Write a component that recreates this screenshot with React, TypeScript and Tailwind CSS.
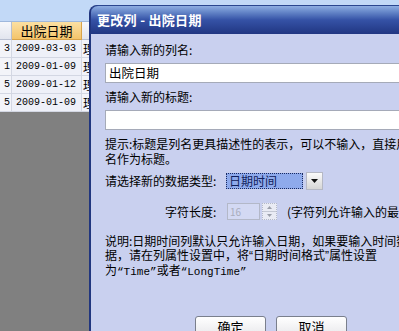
import React from 'react';

const cjk = "font-['Noto_Sans_CJK_SC','Noto_Sans',sans-serif]";
const mono = "font-['Liberation_Mono','DejaVu_Sans_Mono',monospace]";
const latin = "font-['Liberation_Sans',sans-serif]";

const rows = [
  { id: '3', date: '2009-03-03' },
  { id: '1', date: '2009-01-09' },
  { id: '5', date: '2009-01-12' },
  { id: '5', date: '2009-01-09' },
];

function Grid() {
  return (
    <div className="flex flex-col h-full">
      <div className="h-[22px] shrink-0 bg-[#c2d9f7] border-b border-[#9fb8dc]" />
      {/* header */}
      <div className={`flex h-[18px] shrink-0 text-[13px] ${cjk}`}>
        <div className="w-[12px] bg-gradient-to-b from-[#f7f8fb] to-[#e2e5ee] border-r border-b border-[#b8bfd0]" />
        <div className="w-[70px] flex items-center justify-center bg-gradient-to-b from-[#fbe0a2] to-[#f4c46a] border-r border-b border-[#d9a44a] text-black">
          出院日期
        </div>
        <div className="flex-1 bg-gradient-to-b from-[#f7f8fb] to-[#e2e5ee] border-b border-[#b8bfd0]" />
      </div>
      {rows.map((r, i) => (
        <div key={i} className="flex h-[18px] shrink-0 text-[10px] text-black">
          <div className={`w-[12px] flex items-center justify-end pr-[1px] bg-[#f3f4f9] border-r border-b border-[#d3d7e3] overflow-hidden ${mono}`}>
            {r.id}
          </div>
          <div className={`w-[70px] flex items-center pl-[4px] bg-[#eef0f8] border-r border-b border-[#d3d7e3] ${mono}`}>
            {r.date}
          </div>
          <div className={`flex-1 flex items-center pl-[1px] bg-[#f3f4f9] border-b border-[#d3d7e3] text-[12px] overflow-hidden ${cjk}`}>
            理
          </div>
        </div>
      ))}
      <div className="flex-1 bg-[#808080]" />
    </div>
  );
}

const Q = ({ c }: { c: string }) => <span className={latin}>{c}</span>;

function Dialog() {
  return (
    <div className={`absolute left-[89px] top-[5px] right-[-20px] bottom-[-30px] rounded-tl-[8px] overflow-hidden bg-[#21367f] pl-[2px] ${cjk}`}>
      <div className="h-[29px] rounded-tl-[7px] bg-gradient-to-b from-[#8eaee2] via-[#3552a6] via-50% to-[#213682] flex items-center pl-[6px] border-t border-[#2a4690]">
        <span className="text-white text-[13px] font-bold tracking-[0.3px]">更改列 - 出院日期</span>
      </div>
      <div className="h-full bg-[#c9d0ef] pl-[14px] text-[12px] text-black flex flex-col">
        <div className="mt-[8px] leading-[16px] whitespace-nowrap">请输入新的列名:</div>
        <div className="mt-[5px] h-[20px] shrink-0 bg-white border border-[#a5aab8] flex items-center pl-[3px] text-[12.5px] whitespace-nowrap">
          出院日期
        </div>
        <div className="mt-[6px] leading-[16px] whitespace-nowrap">请输入新的标题:</div>
        <div className="mt-[5px] h-[20px] shrink-0 bg-white border border-[#a5aab8]" />
        <div className="mt-[6px] leading-[15px] whitespace-nowrap">
          <div>提示:标题是列名更具描述性的表示，可以不输入，直接用列</div>
          <div>名作为标题。</div>
        </div>
        <div className="mt-[6px] h-[18px] shrink-0 flex items-center whitespace-nowrap">
          <span className="w-[121px] shrink-0">请选择新的数据类型:</span>
          <div className="flex items-center h-[18px] shrink-0">
            <div className="h-[16px] w-[77px] shrink-0 bg-[#8eaaec] border border-dotted border-[#1a2a60] flex items-center pl-[2px] text-[#10205a] leading-none">
              日期时间
            </div>
            <div className="ml-[3px] h-[18px] w-[17px] shrink-0 bg-gradient-to-b from-[#fafafa] to-[#d6d6d6] border border-[#b5b8c4] flex items-center justify-center">
              <svg width="7" height="4" viewBox="0 0 7 4"><path d="M0 0H7L3.5 4Z" fill="#111" /></svg>
            </div>
          </div>
        </div>
        <div className="mt-[13px] h-[17px] shrink-0 flex items-center whitespace-nowrap">
          <span className="ml-[60px] w-[62px] shrink-0">字符长度:</span>
          <div className="h-[17px] w-[33px] shrink-0 border border-[#b3b8c8] bg-[#d3d9f3] flex items-center pl-[2px] text-[10px] text-[#a9adbd]">
            16
          </div>
          <div className="ml-[2px] h-[17px] w-[15px] shrink-0 flex flex-col border border-[#b3b8c8] border-dotted bg-[#e9ebf4]">
            <div className="flex-1 flex items-center justify-center border-b border-[#c4c8d4]">
              <svg width="5" height="3" viewBox="0 0 5 3"><path d="M0 3H5L2.5 0Z" fill="#9a9eaa" /></svg>
            </div>
            <div className="flex-1 flex items-center justify-center">
              <svg width="5" height="3" viewBox="0 0 5 3"><path d="M0 0H5L2.5 3Z" fill="#9a9eaa" /></svg>
            </div>
          </div>
          <span className="ml-[10px] shrink-0">(字符列允许输入的最大长度)</span>
        </div>
        <div className="mt-[14px] leading-[14px] whitespace-nowrap">
          <div>说明:日期时间列默认只允许输入日期，如果要输入时间数</div>
          <div>
            据，请在列属性设置中，将<Q c="“" />日期时间格式<Q c="”" />属性设置
          </div>
          <div>
            为<span className={`${mono} text-[11px]`}>“Time”</span>或者<span className={`${mono} text-[11px]`}>“LongTime”</span>
          </div>
        </div>
        <div className="mt-[37px] flex whitespace-nowrap">
          <div className="ml-[90px] w-[71px] h-[24px] shrink-0 rounded-[3px] border border-[#7a7f8c] bg-gradient-to-b from-white to-[#e4e4e8] flex justify-center pt-[2px] text-[13px] leading-[16px]">
            确定
          </div>
          <div className="ml-[10px] w-[71px] h-[24px] shrink-0 rounded-[3px] border border-[#7a7f8c] bg-gradient-to-b from-white to-[#e4e4e8] flex justify-center pt-[2px] text-[13px] leading-[16px]">
            取消
          </div>
        </div>
      </div>
    </div>
  );
}

export default function App() {
  return (
    <div className="relative w-[399px] h-[331px] overflow-hidden bg-[#808080]">
      <div className="absolute inset-0">
        <Grid />
      </div>
      <Dialog />
    </div>
  );
}
